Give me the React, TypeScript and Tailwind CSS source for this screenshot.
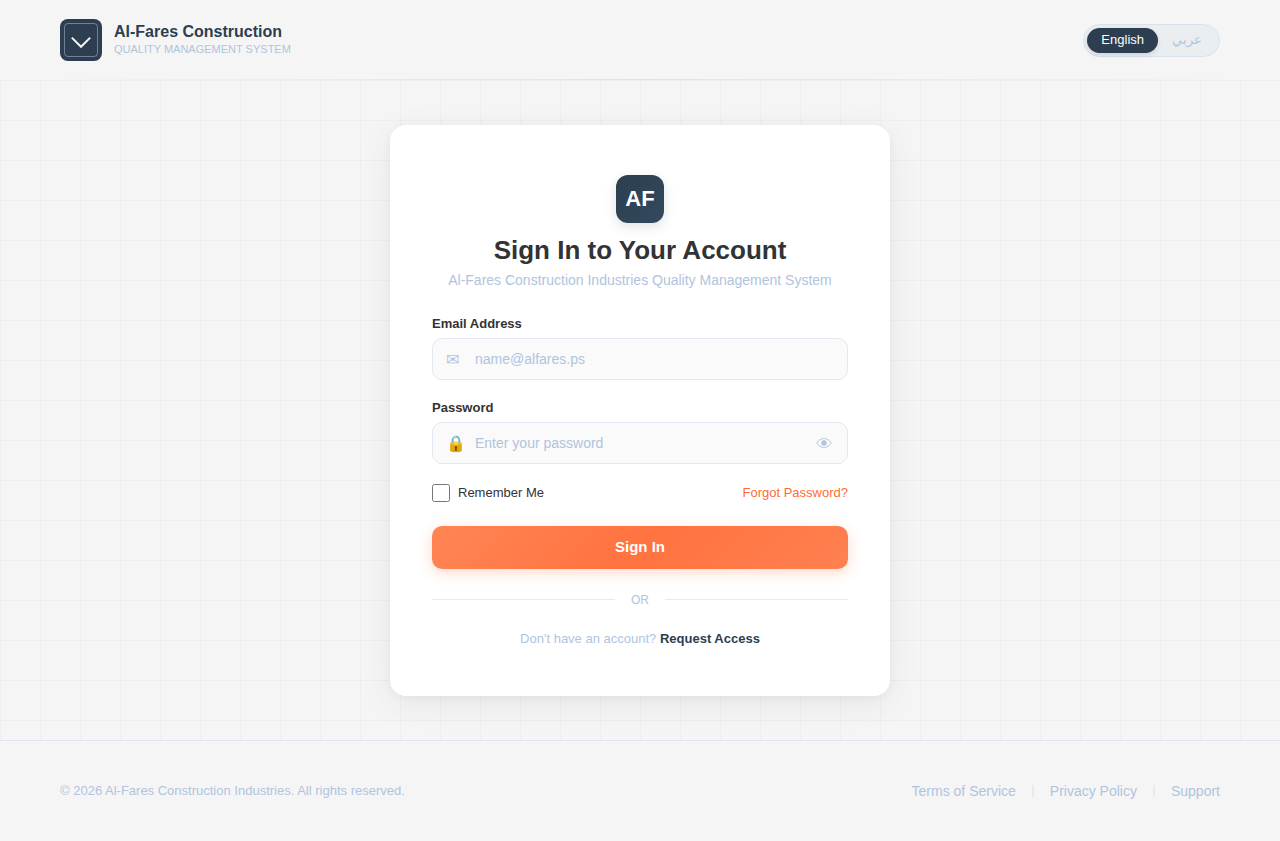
import { useState } from "react";

type Language = "en" | "ar";

const LANGUAGES: { id: Language; label: string }[] = [
  { id: "en", label: "English" },
  { id: "ar", label: "عربي" },
];

const FOOTER_LINKS = ["Terms of Service", "Privacy Policy", "Support"];

function BrandMark() {
  return (
    <svg width="42" height="42" viewBox="0 0 42 42" fill="none" aria-hidden>
      <rect width="42" height="42" rx="8" fill="#2c3e50" />
      <rect x="4.5" y="4.5" width="33" height="33" rx="3.5" stroke="#b0c4de" strokeOpacity="0.5" />
      <path d="M11.8 18.6 21 27.8l9.2-9.2" stroke="#f5f5f5" strokeWidth="2" />
    </svg>
  );
}

function EyeIcon() {
  return (
    <svg width="16" height="10" viewBox="0 0 16 10" fill="none" aria-hidden>
      <path d="M.7 5C2.6 2 5 .6 8 .6S13.400 2 15.300 5C13.400 8 11 9.400 8 9.400S2.600 8 .7 5Z" stroke="currentColor" strokeWidth="0.9" />
      <circle cx="8" cy="5" r="2.700" fill="currentColor" />
    </svg>
  );
}

function Header() {
  const [language, setLanguage] = useState<Language>("en");

  return (
    <header className="relative flex h-20 items-center justify-between px-15">
      <div className="flex items-center gap-3">
        <BrandMark />
        <div>
          <div className="text-base leading-[18px] font-bold text-[#2c3e50]">Al-Fares Construction</div>
          <div className="text-[11px] leading-4 text-[#b0c4de] uppercase">Quality Management System</div>
        </div>
      </div>

      <div className="flex items-center rounded-full border border-[#d8e2ef] bg-[#ebeef1] p-[3px]">
        {LANGUAGES.map(({ id, label }) => (
          <button
            key={id}
            type="button"
            lang={id}
            aria-pressed={language === id}
            onClick={() => setLanguage(id)}
            className={`h-[25px] rounded-full px-3.5 text-[13px] leading-4 ${
              language === id
                ? "bg-[#2c3e50] text-white shadow-[0_2px_4px_rgba(44,62,80,0.15)]"
                : "text-[#b0c4de]"
            }`}
          >
            {label}
          </button>
        ))}
      </div>

      {/* hairline that fades out towards both edges */}
      <div className="absolute inset-x-0 bottom-0 h-px bg-linear-to-r from-transparent via-[#d9e3ef] to-transparent" />
    </header>
  );
}

function SignInCard() {
  const [showPassword, setShowPassword] = useState(false);

  return (
    <section className="w-full max-w-[500px] rounded-2xl bg-white px-[42px] pt-[50px] pb-[47px] shadow-[0_8px_32px_rgba(44,62,80,0.08),0_2px_8px_rgba(0,0,0,0.04)]">
      <div className="flex flex-col items-center text-center">
        <div className="flex size-12 items-center justify-center rounded-xl bg-linear-135 from-[#2c3e50] to-[#34495e] text-[22px] font-bold text-white shadow-[0_4px_12px_rgba(44,62,80,0.15)]">
          AF
        </div>
        <h1 className="mt-[11px] text-[26px] leading-8 font-bold text-[#333]">Sign In to Your Account</h1>
        <p className="mt-1 text-sm leading-5 text-[#b0c4de]">
          Al-Fares Construction Industries Quality Management System
        </p>
      </div>

      <form className="mt-[26px]" onSubmit={(e) => e.preventDefault()}>
        <label htmlFor="email" className="mb-1.5 block text-[13px] leading-4 font-bold text-[#333]">
          Email Address
        </label>
        <div className="relative">
          <span className="pointer-events-none absolute inset-y-0 left-3.5 flex items-center pt-0.5 text-base text-[#b0c4de]">
            ✉
          </span>
          <input
            id="email"
            type="email"
            placeholder="name@alfares.ps"
            className="h-[42px] w-full rounded-[10px] border border-[#e2e8f2] bg-[#fafafa] px-[42px] text-sm text-[#333] outline-none placeholder:text-[#b0c4de] focus:border-[#ff6b35]"
          />
        </div>

        <label htmlFor="password" className="mt-5 mb-1.5 block text-[13px] leading-4 font-bold text-[#333]">
          Password
        </label>
        <div className="relative">
          <span className="pointer-events-none absolute inset-y-0 left-3.5 flex items-center pt-0.5 text-base text-[#b0c4de]">
            🔒
          </span>
          <input
            id="password"
            type={showPassword ? "text" : "password"}
            placeholder="Enter your password"
            className="h-[42px] w-full rounded-[10px] border border-[#e2e8f2] bg-[#fafafa] px-[42px] text-sm text-[#333] outline-none placeholder:text-[#b0c4de] focus:border-[#ff6b35]"
          />
          <button
            type="button"
            aria-label="Show password"
            onClick={() => setShowPassword(!showPassword)}
            className="absolute inset-y-0 right-4 flex items-center text-[#b0c4de]"
          >
            <EyeIcon />
          </button>
        </div>

        <div className="mt-5 flex h-[18px] items-center justify-between text-[13px]">
          <label className="flex items-center gap-2 text-[#333]">
            <input type="checkbox" className="size-[18px] accent-[#ff6b35]" />
            Remember Me
          </label>
          <a href="#forgot" className="text-[#ff6b35]">
            Forgot Password?
          </a>
        </div>

        <button
          type="submit"
          className="mt-6 h-[43px] w-full rounded-[10px] bg-[linear-gradient(135deg,#ff8555_0%,#ff7340_50%,#ff8050_100%)] text-[15px] leading-6 font-bold text-white shadow-[0_4px_14px_rgba(255,107,53,0.25)]"
        >
          Sign In
        </button>
      </form>

      <div className="mt-[23px] flex items-center gap-4 text-xs text-[#b0c4de]">
        <span className="h-px flex-1 bg-[#e6ebf3]" />
        OR
        <span className="h-px flex-1 bg-[#e6ebf3]" />
      </div>

      <p className="mt-[21px] text-center text-[13px] leading-5 text-[#b0c4de]">
        Don't have an account?{" "}
        <a href="#request" className="font-bold text-[#2c3e50]">
          Request Access
        </a>
      </p>
    </section>
  );
}

function Footer() {
  return (
    <footer className="flex items-center justify-between border-t border-[#dde5f0] px-15 py-10 text-[#b0c4de]">
      <p className="text-[13px] leading-5">© 2026 Al-Fares Construction Industries. All rights reserved.</p>
      <nav className="flex items-center gap-4 text-sm leading-5">
        {FOOTER_LINKS.map((link, idx) => (
          <div key={link} className="flex items-center gap-4">
            {idx > 0 && <span className="h-3 w-0.5 bg-[#e6ebf2]" />}
            <a href="#footer">{link}</a>
          </div>
        ))}
      </nav>
    </footer>
  );
}

export default function App() {
  return (
    <div className="flex min-h-screen flex-col bg-[#f5f5f5] font-['Liberation_Sans',Arial,sans-serif]">
      <Header />
      <main className="flex flex-1 items-center justify-center bg-[linear-gradient(rgba(44,62,80,0.03)_1px,transparent_1px),linear-gradient(90deg,rgba(44,62,80,0.03)_1px,transparent_1px)] bg-size-[40px_40px] px-5 py-10">
        <SignInCard />
      </main>
      <Footer />
    </div>
  );
}
